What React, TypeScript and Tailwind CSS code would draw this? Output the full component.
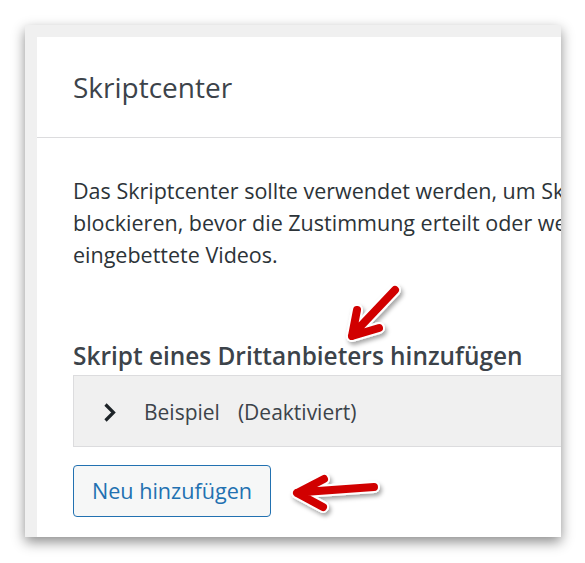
import React from "react";

export default function App() {
  return (
    <div className="relative w-[585px] h-[563px] bg-white overflow-hidden" style={{ fontFamily: '"Open Sans", "Noto Sans", sans-serif' }}>
      <div className="pt-[25px] pl-[25px]">
        <div className="w-[536px] h-[512px] bg-[#f0f0f0] pt-[12px] pl-[12px] shadow-[0_5px_12px_rgba(0,0,0,0.45)] flex">
          <div className="flex-1 bg-white overflow-hidden flex flex-col">
            <div className="h-[101px] shrink-0 border-b border-[#dcdcde] flex items-center pl-[36px]">
              <h1 className="text-[28px] text-[#3c434a] whitespace-nowrap">Skriptcenter</h1>
            </div>
            <div className="pl-[36px] pt-[37px]">
              <p className="text-[21.5px] leading-[32px] text-[#2c3338] whitespace-nowrap">
                Das Skriptcenter sollte verwendet werden, um Skripte und iFrames von
                <br />
                blockieren, bevor die Zustimmung erteilt oder wenn die Zustimmung
                <br />
                eingebettete Videos.
              </p>
              <h2 className="mt-[70px] text-[24.4px] font-semibold text-[#3c434a] whitespace-nowrap leading-[30px]">
                Skript eines Drittanbieters hinzufügen
              </h2>
              <div className="mt-[4px] h-[72px] pt-[3px] bg-[#f0f0f0] border-t border-l border-b border-[#dcdcde] flex items-center">
                <svg width="18" height="24" viewBox="0 0 18 24" className="ml-[27px]">
                  <path d="M4.5 3.5 L12.5 11.5 L4.5 19.5" fill="none" stroke="#1d2327" strokeWidth="3.2" />
                </svg>
                <span className="ml-[25px] text-[21px] text-[#3c434a] whitespace-nowrap">Beispiel</span>
                <span className="ml-[18px] text-[21px] text-[#3c434a] whitespace-nowrap">(Deaktiviert)</span>
              </div>
              <button className="mt-[18px] w-[198px] h-[52px] rounded-[4px] border border-[#2271b1] bg-[#f6f7f7] text-[#2271b1] text-[21.6px] whitespace-nowrap">
                Neu hinzufügen
              </button>
            </div>
          </div>
        </div>
      </div>
      <svg className="absolute left-0 top-0" width="585" height="563" viewBox="0 0 585 563">
        <defs>
          <filter id="sh" x="-50%" y="-50%" width="200%" height="200%">
            <feDropShadow dx="2" dy="3" stdDeviation="2" floodColor="#000" floodOpacity="0.35" />
          </filter>
        </defs>
        <g filter="url(#sh)">
          <path d="M395 290 L358 329 M352 336 L357 310 M352 336 L379 328" fill="none" stroke="#fff" strokeWidth="12" strokeLinecap="round" strokeLinejoin="round" />
          <path d="M395 290 L358 329 M352 336 L357 310 M352 336 L379 328" fill="none" stroke="#d10000" strokeWidth="8" strokeLinecap="round" strokeLinejoin="round" />
          <path d="M374 487 L304 492 M297 493 L324 479 M297 493 L323 507" fill="none" stroke="#fff" strokeWidth="12" strokeLinecap="round" strokeLinejoin="round" />
          <path d="M374 487 L304 492 M297 493 L324 479 M297 493 L323 507" fill="none" stroke="#d10000" strokeWidth="8" strokeLinecap="round" strokeLinejoin="round" />
        </g>
      </svg>
    </div>
  );
}
